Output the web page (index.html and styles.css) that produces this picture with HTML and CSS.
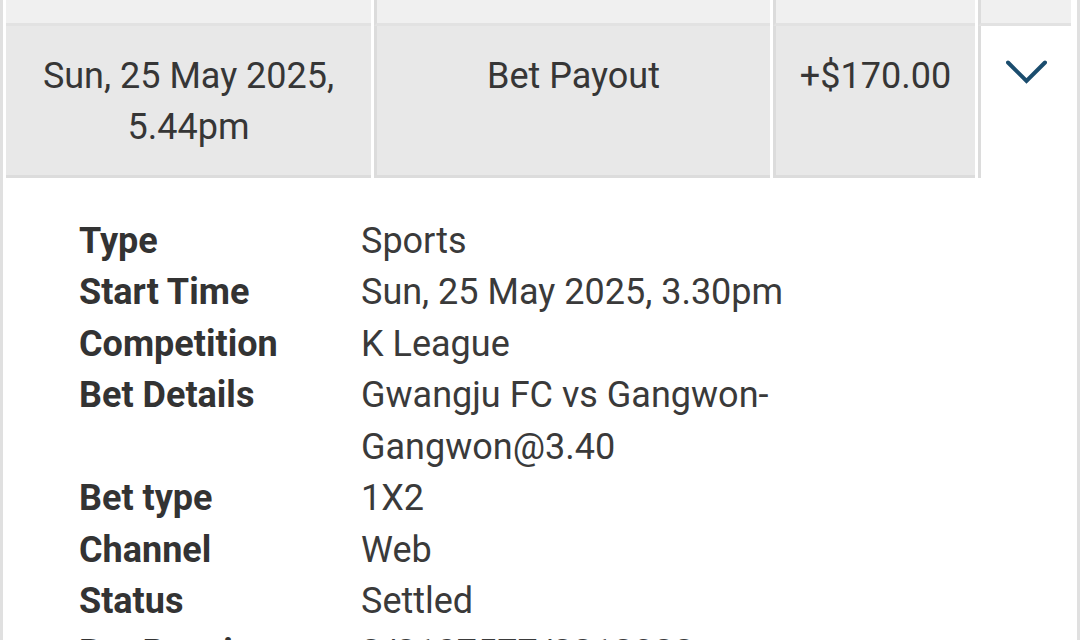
FILE: index.html
```html
<!DOCTYPE html>
<html>
<head>
<meta charset="utf-8">
<link rel="stylesheet" href="styles.css">
</head>
<body>
<div class="table">
  <div class="row row-prev">
    <div class="cell"></div>
    <div class="cell"></div>
    <div class="cell"></div>
    <div class="cell"></div>
  </div>
  <div class="row row-main">
    <div class="cell">Sun, 25 May 2025,<br>5.44pm</div>
    <div class="cell">Bet Payout</div>
    <div class="cell">+$170.00</div>
    <div class="cell cell-toggle">
      <svg class="chevron" width="41" height="24" viewBox="0 0 41 24" aria-hidden="true">
        <polyline points="2,2.5 20.5,21 39,2.5" fill="none" stroke="#1b4d6e" stroke-width="4" stroke-linecap="round" stroke-linejoin="miter"/>
      </svg>
    </div>
  </div>
  <div class="details">
    <div class="label">Type</div><div class="value">Sports</div>
    <div class="label">Start Time</div><div class="value">Sun, 25 May 2025, 3.30pm</div>
    <div class="label">Competition</div><div class="value">K League</div>
    <div class="label">Bet Details</div><div class="value">Gwangju FC vs Gangwon-Gangwon@3.40</div>
    <div class="label">Bet type</div><div class="value">1X2</div>
    <div class="label">Channel</div><div class="value">Web</div>
    <div class="label">Status</div><div class="value">Settled</div>
    <div class="label">Bet Receipt</div><div class="value">2/2107577/2212322</div>
  </div>
</div>
</body>
</html>
```
FILE: styles.css
```css
html, body {
  margin: 0;
  padding: 0;
  background: #ffffff;
  overflow: hidden;
}
body {
  font-family: Roboto, "Liberation Sans", sans-serif;
  color: #363636;
  width: 1080px;
  height: 640px;
}
.table {
  border-left: 3px solid #e0e0e0;
  border-right: 3px solid #e0e0e0;
  padding: 0 6px 0 3px;
  min-height: 700px;
}
.row {
  display: grid;
  grid-template-columns: 365px 396px 202px 93px;
  column-gap: 3px;
}
.cell {
  box-sizing: border-box;
}
.cell + .cell {
  border-left: 3px solid #dcdcdc;
}
.row-prev .cell {
  height: 26px;
  background: #f0f0f0;
  border-bottom: 3px solid #e2e2e2;
}
.row-main .cell {
  background: #e8e8e8;
  border-bottom: 3px solid #dcdcdc;
  padding: 25px 0 22px;
  font-size: 36px;
  line-height: 51px;
  text-align: center;
}
.row-main .cell-toggle {
  background: #ffffff;
  border-bottom: none;
  padding-top: 34px;
  display: flex;
  justify-content: center;
  align-items: flex-start;
}
.chevron {
  display: block;
}
.details {
  display: grid;
  grid-template-columns: 282px 460px;
  padding: 38px 0 0 73px;
  font-size: 36px;
  line-height: 51.43px;
}
.label {
  font-weight: 700;
  color: #333333;
}
.value {
  color: #3a3a3a;
}
```
